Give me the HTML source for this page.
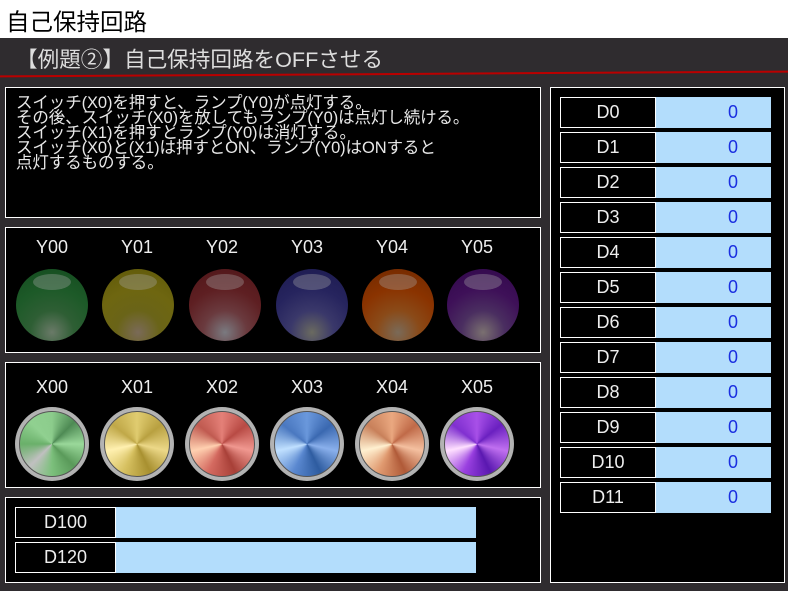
<!DOCTYPE html><html><head><meta charset="utf-8"><style>
*{margin:0;padding:0;box-sizing:border-box}
body{width:788px;height:591px;background:#2f2c2f;position:relative;overflow:hidden;font-family:"Liberation Sans","Noto Sans CJK JP",sans-serif;color:#fff}
.a{position:absolute}
.box{position:absolute;background:#000;border:1px solid #fff}
.lamp{position:absolute;width:72px;height:72px;border-radius:50%}
.lamp::after{content:"";position:absolute;left:17px;top:5px;width:38px;height:16px;border-radius:50%;background:rgba(170,170,170,.35)}
.btn{position:absolute;width:74px;height:74px;border-radius:50%;background:radial-gradient(circle,#ddd 0,#aaa 80%,#555 100%);}
.btn i{position:absolute;left:4px;top:4px;width:66px;height:66px;border-radius:50%;border:1px solid #555}
.lbl{position:absolute;width:60px;text-align:center;font-size:18px;color:#eee}
.dl{position:absolute;background:#000;border:1px solid #fff;font-size:18px;text-align:center;line-height:29px;color:#eee}
.dv{position:absolute;background:#b3ddfc;font-size:18px;color:#1a2ee0;line-height:31px}
</style></head><body>
<div class="a" style="left:0;top:0;width:788px;height:38px;background:#fff;color:#000;font-size:23.5px;padding:3px 0 0 6px">自己保持回路</div>
<div class="a" style="left:16px;top:43px;font-size:21.6px;color:#ddd">【例題②】自己保持回路をOFFさせる</div>
<div class="a" style="left:0;top:73px;width:788px;height:2px;background:#b00;transform:rotate(-0.35deg)"></div>
<div class="box" style="left:5px;top:87px;width:536px;height:131px;padding:8px 0 0 10px;font-size:16.5px;line-height:15px;color:#e8e8e8;letter-spacing:-0.1px">スイッチ(X0)を押すと、ランプ(Y0)が点灯する。<br>その後、スイッチ(X0)を放してもランプ(Y0)は点灯し続ける。<br>スイッチ(X1)を押すとランプ(Y0)は消灯する。<br>スイッチ(X0)と(X1)は押すとON、ランプ(Y0)はONすると<br>点灯するものする。</div>
<div class="box" style="left:5px;top:227px;width:536px;height:126px"></div>
<div class="box" style="left:5px;top:362px;width:536px;height:126px"></div>
<div class="box" style="left:5px;top:497px;width:536px;height:86px"></div>
<div class="box" style="left:550px;top:87px;width:235px;height:496px"></div>

<div class="lbl" style="left:22px;top:237px">Y00</div>
<div class="lbl" style="left:107px;top:237px">Y01</div>
<div class="lbl" style="left:192px;top:237px">Y02</div>
<div class="lbl" style="left:277px;top:237px">Y03</div>
<div class="lbl" style="left:362px;top:237px">Y04</div>
<div class="lbl" style="left:447px;top:237px">Y05</div>
<div class="lamp" style="left:16px;top:269px;background:radial-gradient(circle at 50% 88%,#6a7a68 0,#2e5e34 30%,#1d5a28 60%,#134a1e 100%)"></div>
<div class="lamp" style="left:102px;top:269px;background:radial-gradient(circle at 50% 88%,#7a6a58 0,#6a6418 30%,#6e6610 60%,#5e5808 100%)"></div>
<div class="lamp" style="left:189px;top:269px;background:radial-gradient(circle at 50% 88%,#7a7a80 0,#6a3a3e 30%,#5e1f22 60%,#4e1518 100%)"></div>
<div class="lamp" style="left:276px;top:269px;background:radial-gradient(circle at 50% 88%,#6a6a60 0,#3a386a 30%,#26245e 60%,#1c1a4e 100%)"></div>
<div class="lamp" style="left:362px;top:269px;background:radial-gradient(circle at 50% 88%,#7a6a58 0,#8a4a18 30%,#8a3300 60%,#6e2800 100%)"></div>
<div class="lamp" style="left:447px;top:269px;background:radial-gradient(circle at 50% 88%,#7a7070 0,#4a2e60 30%,#3e1058 60%,#30084a 100%)"></div>

<div class="lbl" style="left:22px;top:377px">X00</div>
<div class="lbl" style="left:107px;top:377px">X01</div>
<div class="lbl" style="left:192px;top:377px">X02</div>
<div class="lbl" style="left:277px;top:377px">X03</div>
<div class="lbl" style="left:362px;top:377px">X04</div>
<div class="lbl" style="left:447px;top:377px">X05</div>
<div class="btn" style="left:15px;top:407px"><i style="background:conic-gradient(#8ccc8c,#4e8a54,#9ad89a,#5a9a5a,#7cc07c,#c0c0c0,#6ab06a,#90d090,#8ccc8c)"></i></div>
<div class="btn" style="left:100px;top:407px"><i style="background:conic-gradient(#e0cc70,#b8a040,#ecd888,#a89030,#d6c060,#fff0b0,#c0a848,#e0cc70)"></i></div>
<div class="btn" style="left:185px;top:407px"><i style="background:conic-gradient(#e48078,#b84a44,#f09890,#a84038,#d46a60,#ffd0b0,#c05a50,#e48078)"></i></div>
<div class="btn" style="left:270px;top:407px"><i style="background:conic-gradient(#6a98dc,#3a68b0,#8ab0ec,#2e5ca0,#5a88d0,#c0e0ff,#4a78c0,#6a98dc)"></i></div>
<div class="btn" style="left:355px;top:407px"><i style="background:conic-gradient(#eaa880,#c06a48,#f4c0a0,#b05a38,#e09a70,#fff0d0,#c8805a,#eaa880)"></i></div>
<div class="btn" style="left:440px;top:407px"><i style="background:conic-gradient(#a850e8,#6a20c0,#c070f0,#5a18b0,#9a40e0,#ffe0ff,#8030d0,#a850e8)"></i></div>

<div class="dl" style="left:15px;top:507px;width:101px;height:31px">D100</div>
<div class="dv" style="left:116px;top:507px;width:360px;height:31px"></div>
<div class="dl" style="left:15px;top:542px;width:101px;height:31px">D120</div>
<div class="dv" style="left:116px;top:542px;width:360px;height:31px"></div>

<div id="d"></div>
<script>
var h='';for(var i=0;i<12;i++){var t=97+35*i;h+='<div class="dl" style="left:560px;top:'+t+'px;width:96px;height:31px">D'+i+'</div><div class="dv" style="left:656px;top:'+t+'px;width:115px;height:31px;padding-left:72px">0</div>';}
document.getElementById('d').innerHTML=h;
</script>
</body></html>
